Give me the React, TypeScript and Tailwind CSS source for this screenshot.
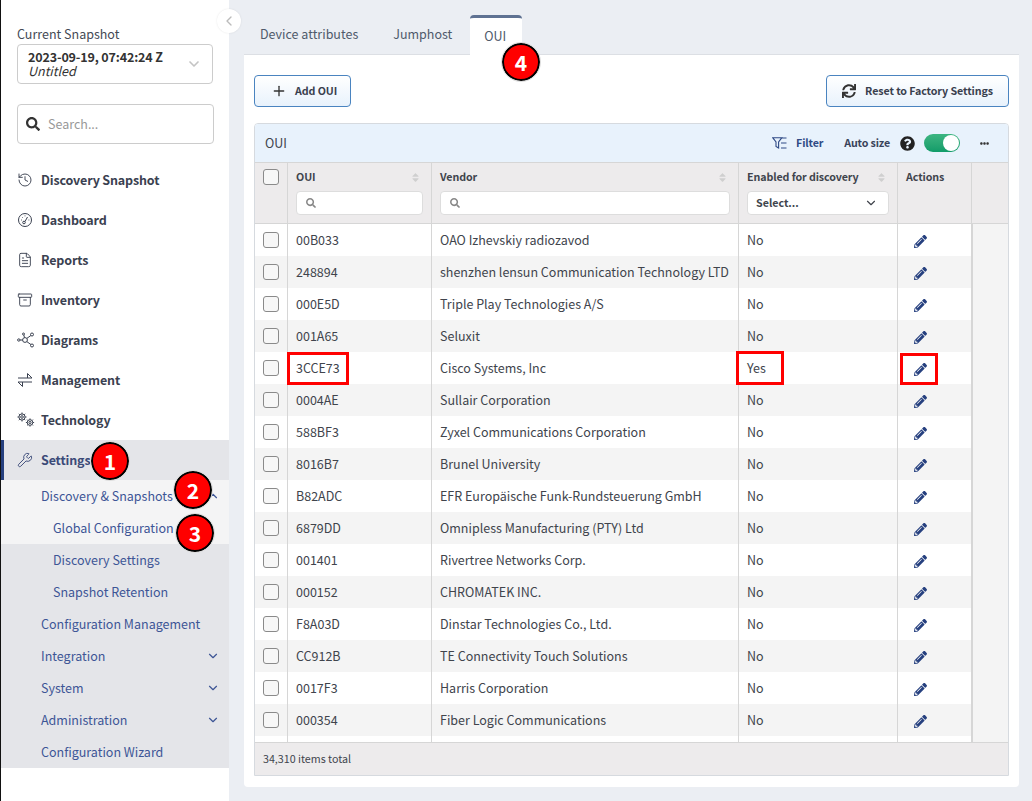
import React from "react";
import { ChevronDown, ChevronUp, ChevronLeft, History, FileText, Archive, Wrench, Plus } from "lucide-react";
import { FaSearch, FaPencilAlt, FaSync, FaQuestionCircle, FaEllipsisH, FaSort } from "react-icons/fa";

const rows = [
  ["00B033", "OAO Izhevskiy radiozavod", "No"],
  ["248894", "shenzhen lensun Communication Technology LTD", "No"],
  ["000E5D", "Triple Play Technologies A/S", "No"],
  ["001A65", "Seluxit", "No"],
  ["3CCE73", "Cisco Systems, Inc", "Yes"],
  ["0004AE", "Sullair Corporation", "No"],
  ["588BF3", "Zyxel Communications Corporation", "No"],
  ["8016B7", "Brunel University", "No"],
  ["B82ADC", "EFR Europäische Funk-Rundsteuerung GmbH", "No"],
  ["6879DD", "Omnipless Manufacturing (PTY) Ltd", "No"],
  ["001401", "Rivertree Networks Corp.", "No"],
  ["000152", "CHROMATEK INC.", "No"],
  ["F8A03D", "Dinstar Technologies Co., Ltd.", "No"],
  ["CC912B", "TE Connectivity Touch Solutions", "No"],
  ["0017F3", "Harris Corporation", "No"],
  ["000354", "Fiber Logic Communications", "No"],
];

const GaugeIcon = () => (
  <svg width="16" height="16" viewBox="0 0 16 16" fill="none" stroke="currentColor" strokeWidth="1">
    <circle cx="8" cy="8" r="6.5" />
    <circle cx="7" cy="10.5" r="1.3" />
    <path d="M8 9.5 10.5 5M4 8h.8M5 5l.6.6M8 3.5v.8M11.5 8h.8" />
  </svg>
);
const NetIcon = () => (
  <svg width="18" height="16" viewBox="0 0 18 16" fill="none" stroke="currentColor" strokeWidth="1">
    <circle cx="1.8" cy="8" r="1.2" />
    <circle cx="8" cy="8" r="2.4" />
    <circle cx="15" cy="2.5" r="1.5" />
    <circle cx="15" cy="13.5" r="1.5" />
    <circle cx="6.5" cy="2" r="1" />
    <path d="M3 8h2.6M9.8 6.4 13.9 3.5M9.8 9.6 13.9 12.5M7.5 5.6 6.8 3" />
  </svg>
);
const ExchangeIcon = () => (
  <svg width="16" height="16" viewBox="0 0 16 16" fill="none" stroke="currentColor" strokeWidth="1">
    <path d="M1 6h14L10.5 1.500V6M15 10H1l4.500 4.500V10" />
  </svg>
);
const GearsIcon = () => (
  <svg width="18" height="16" viewBox="0 0 18 16" fill="none" stroke="currentColor" strokeWidth="1">
    <circle cx="5" cy="5" r="1.300" />
    <circle cx="5" cy="5" r="3.100" />
    <path d="M5 .5v1.400M5 8.100v1.400M.5 5h1.400M8.100 5h1.400M1.800 1.800l1 1M7.200 7.200l1 1M1.800 8.200l1-1M7.200 2.800l1-1" />
    <circle cx="13" cy="10.500" r="1.100" />
    <circle cx="13" cy="10.500" r="2.800" />
    <path d="M13 6.400v1.300M13 13.300v1.300M8.900 10.500h1.300M15.800 10.500h1.300M10.100 7.600l.9.9M15 12.500l.9.9M10.100 13.400l.9-.9M15 8.500l.9-.9" />
  </svg>
);
const FilterIcon = () => (
  <svg width="15" height="12" viewBox="0 0 15 12" fill="none" stroke="currentColor" strokeWidth="1.1">
    <path d="M.7.7h9.2L6.6 5v6L4 9.400V5zM10 1h4.500M9 6h5.500M9 11h5.500" />
  </svg>
);

const main = [
  ["Discovery Snapshot", <History size={16} strokeWidth={1.4} />],
  ["Dashboard", <GaugeIcon />],
  ["Reports", <FileText size={16} strokeWidth={1.4} />],
  ["Inventory", <Archive size={16} strokeWidth={1.4} />],
  ["Diagrams", <NetIcon />],
  ["Management", <ExchangeIcon />],
  ["Technology", <GearsIcon />],
] as const;

const sub: [string, boolean, boolean][] = [
  ["Discovery Settings", true, false],
  ["Snapshot Retention", true, false],
  ["Configuration Management", false, false],
  ["Integration", false, true],
  ["System", false, true],
  ["Administration", false, true],
  ["Configuration Wizard", false, false],
];

const Check = () => <div className="w-4 h-4 rounded-[3px] border border-[#8a8a8a] bg-[#f7f7f7]" />;

const Badge = ({ n, cls }: { n: string; cls: string }) => (
  <div className={`absolute w-[38px] h-[38px] rounded-full bg-[#f00] border-2 border-black outline outline-1 outline-[#ddd] flex items-center justify-center text-white text-[21px] font-bold leading-none ${cls}`}>
    {n}
  </div>
);

const Mark = ({ cls }: { cls: string }) => <div className={`absolute border-[3px] border-[#f00] ${cls}`} />;

function Sidebar() {
  return (
    <aside className="w-[229px] shrink-0 border-l border-l-[#111] bg-white flex flex-col">
      <div className="pl-4 pr-4 pt-[25px] pb-4 h-[160px]">
        <div className="text-[12.500px] leading-[18px] text-[#444a55]">Current Snapshot</div>
        <div className="mt-[1px] h-10 w-[196px] rounded border border-[#ccc] flex items-center justify-between pl-[10px] pr-[10px]">
          <div className="text-[12.500px] leading-[14px] text-[#333] whitespace-nowrap">
            <div className="font-semibold tracking-[-0.15px]">2023-09-19, 07:42:24 Z</div>
            <div className="italic">Untitled</div>
          </div>
          <ChevronDown size={16} strokeWidth={2.5} className="text-[#c4c4c4]" />
        </div>
        <div className="mt-5 h-10 w-[197px] rounded border border-[#ccc] flex items-center gap-2 pl-[8px]">
          <FaSearch size={14} className="text-[#333]" />
          <span className="text-[12.500px] text-[#999]">Search...</span>
        </div>
      </div>
      {main.map(([label, icon]) => (
        <div key={label} className="h-10 flex items-center pl-4 text-[#3a4150]">
          <span className="w-[24px] flex shrink-0">{icon}</span>
          <span className="text-[12.500px] tracking-[-0.15px] font-semibold">{label}</span>
        </div>
      ))}
      <div className="h-10 flex items-center pl-4 bg-[#e4e5e9] text-[#3b4a78] relative">
        <div className="absolute left-0 top-0 bottom-0 w-[3px] bg-[#26407f]" />
        <span className="w-[24px] flex shrink-0"><Wrench size={16} strokeWidth={1.4} /></span>
        <span className="text-[12.500px] tracking-[-0.15px] font-semibold">Settings</span>
      </div>
      <div className="bg-[#f4f4f5] text-[12.500px] text-[#3d5596]">
        <div className="h-8 flex items-center justify-between pl-10 pr-[9px]">
          <span>Discovery &amp; Snapshots</span>
          <ChevronUp size={14} />
        </div>
        <div className="h-8 flex items-center pl-[52px]">Global Configuration</div>
      </div>
      <div className="bg-[#e4e5e9] text-[12.500px] text-[#3d5596]">
        {sub.map(([t, indented, chev]) => (
          <div key={t} className={`h-8 flex items-center justify-between pr-[9px] ${indented ? "pl-[52px]" : "pl-10"}`}>
            <span>{t}</span>
            {chev && <ChevronDown size={14} />}
          </div>
        ))}
      </div>
    </aside>
  );
}

const Sort = () => <FaSort size={11} className="text-[#cfcfcf]" />;
const cols = "grid grid-cols-[33px_144px_307px_159px_74px]";
const headLabel = "flex items-center justify-between h-4 text-[10.700px] tracking-[-0.1px] font-semibold pr-[2px]";

function Grid() {
  return (
    <div className="mt-4 flex-1 min-h-0 border border-[#d6dadf] rounded-t flex flex-col overflow-hidden text-[12.500px] text-[#40444c]">
      <div className="h-[39px] shrink-0 bg-[#e8f2fc] flex items-center pl-[10px] pr-[19px] border-b border-[#d6d6d6]">
        <span>OUI</span>
        <div className="ml-auto flex items-center text-[10.700px] tracking-[-0.15px] font-semibold text-[#39435a]">
          <span className="text-[#2f4a85] flex"><FilterIcon /></span>
          <span className="ml-[9px] text-[#2f4a85]">Filter</span>
          <span className="ml-[21px]">Auto size</span>
          <FaQuestionCircle size={15} className="ml-[10px] text-[#222]" />
          <div className="ml-[9px] w-9 h-[18px] rounded-full bg-gradient-to-b from-[#3cb581] to-[#109c69] relative">
            <div className="absolute right-[1px] top-[1px] w-4 h-4 rounded-full bg-white" />
          </div>
          <FaEllipsisH size={9} className="ml-5 text-[#333]" />
        </div>
      </div>
      <div className="h-[61px] shrink-0 flex bg-[#edebec] border-b border-[#d6d6d6]">
        <div className={cols}>
          <div className="border-r border-[#d6d6d6] pl-2 pt-[6px]"><Check /></div>
          <div className="border-r border-[#d6d6d6] px-2 pt-[6px]">
            <div className={headLabel}><span>OUI</span><Sort /></div>
            <div className="mt-[6px] h-[24px] bg-white rounded border border-[#ddd] flex items-center pl-[9px]"><FaSearch size={10} className="text-[#888]" /></div>
          </div>
          <div className="border-r border-[#d6d6d6] px-2 pt-[6px]">
            <div className={headLabel}><span>Vendor</span><Sort /></div>
            <div className="mt-[6px] h-[24px] bg-white rounded border border-[#ddd] flex items-center pl-[9px]"><FaSearch size={10} className="text-[#888]" /></div>
          </div>
          <div className="border-r border-[#d6d6d6] px-2 pt-[6px]">
            <div className={headLabel}><span>Enabled for discovery</span><Sort /></div>
            <div className="mt-[6px] h-[24px] bg-white rounded border border-[#ddd] flex items-center justify-between pl-2 pr-[10px] text-[10.700px] font-semibold">
              <span>Select...</span><ChevronDown size={14} />
            </div>
          </div>
          <div className="border-r border-[#d6d6d6] px-2 pt-[6px]">
            <div className="flex items-center h-4 text-[10.700px] tracking-[-0.1px] font-semibold">Actions</div>
          </div>
        </div>
      </div>
      <div className="flex-1 min-h-0 flex bg-[#f4f4f4]">
        <div className="w-[717px] bg-white overflow-hidden">
          {rows.map((r, i) => (
            <div key={r[0]} className={`${cols} h-8 ${i % 2 ? "bg-[#f4f4f4]" : "bg-white"}`}>
              <div className="border-r border-[#d6d6d6] pl-2 flex items-center"><Check /></div>
              <div className="border-r border-[#d6d6d6] px-2 flex items-center">{r[0]}</div>
              <div className="border-r border-[#d6d6d6] px-2 flex items-center whitespace-nowrap">{r[1]}</div>
              <div className="border-r border-[#d6d6d6] px-2 flex items-center">{r[2]}</div>
              <div className="border-r border-[#d6d6d6] pl-[16px] pt-[2px] flex items-center"><FaPencilAlt size={13} className="text-[#26407f]" /></div>
            </div>
          ))}
          <div className={`${cols} h-[7px] bg-white`}>
            <div className="border-r border-[#d6d6d6]" /><div className="border-r border-[#d6d6d6]" /><div className="border-r border-[#d6d6d6]" /><div className="border-r border-[#d6d6d6]" /><div className="border-r border-[#d6d6d6]" />
          </div>
        </div>
        <div className="flex-1 border-l border-[#d6d6d6]" />
      </div>
      <div className="h-[33px] shrink-0 bg-[#edebec] border-t border-[#d6d6d6] flex items-center pl-2 pt-[1px] text-[10.700px]">34,310 items total</div>
    </div>
  );
}

export default function App() {
  return (
    <div className="relative h-[801px] w-[1032px] overflow-hidden flex bg-[#ebeef3] font-['Noto_Sans_CJK_SC','Source_Sans_Pro',sans-serif]">
      <Sidebar />
      <main className="flex-1 min-w-0 pl-[15px] pr-[13px] pt-[15px] pb-[14px] flex flex-col">
        <div className="h-[40px] shrink-0 flex items-stretch text-[12.500px] text-[#4f5a6b] border-b border-[#dcdfe4]">
          <div className="pl-4 flex items-center">Device attributes</div>
          <div className="pl-[35px] flex items-center">Jumphost</div>
          <div className="ml-[18px] w-[52px] h-[40px] bg-white border-t-[3px] border-[#5f7292] rounded-t flex items-center justify-center pr-[2px]">OUI</div>
        </div>
        <div className="flex-1 min-h-0 bg-white rounded-b pl-[10px] pr-[10px] pt-5 pb-[11px] flex flex-col">
          <div className="h-8 shrink-0 flex justify-between text-[10.700px] tracking-[-0.1px] font-semibold text-[#39404e]">
            <button className="w-[97px] rounded border border-[#4a84c0] bg-gradient-to-b from-white to-[#e8f2fc] flex items-center gap-2 pl-[16px]">
              <Plus size={16} strokeWidth={2} className="text-[#333]" />Add OUI
            </button>
            <button className="w-[183px] rounded border border-[#4a84c0] bg-gradient-to-b from-white to-[#e8f2fc] flex items-center justify-center gap-[9px]">
              <FaSync size={14} className="text-[#333]" />Reset to Factory Settings
            </button>
          </div>
          <Grid />
        </div>
      </main>
      <div className="absolute left-[217px] top-[9px] w-6 h-6 rounded-full bg-white flex items-center justify-center shadow-[0_0_2px_rgba(0,0,0,0.1)]">
        <ChevronLeft size={16} className="text-[#bbb]" />
      </div>
      <Mark cls="left-[287px] top-[352px] w-[62px] h-[33px]" />
      <Mark cls="left-[736px] top-[351px] w-[48px] h-[34px]" />
      <Mark cls="left-[900px] top-[353px] w-[38px] h-[32px]" />
      <Badge n="1" cls="left-[91px] top-[442px]" />
      <Badge n="2" cls="left-[174px] top-[471px]" />
      <Badge n="3" cls="left-[176px] top-[514px]" />
      <Badge n="4" cls="left-[502px] top-[43px]" />
    </div>
  );
}
